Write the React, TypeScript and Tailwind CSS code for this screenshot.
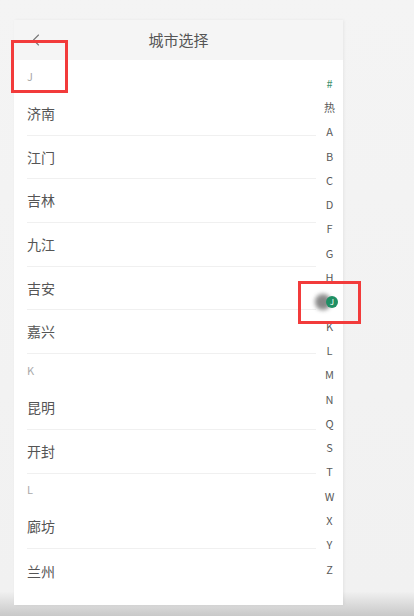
import { ChevronLeft } from 'lucide-react';

const groups = [
  { letter: 'J', cities: ['济南', '江门', '吉林', '九江', '吉安', '嘉兴'] },
  { letter: 'K', cities: ['昆明', '开封'] },
  { letter: 'L', cities: ['廊坊', '兰州'] },
];

const index = ['#', '热', 'A', 'B', 'C', 'D', 'F', 'G', 'H', 'J', 'K', 'L', 'M', 'N', 'Q', 'S', 'T', 'W', 'X', 'Y', 'Z'];

const font = { fontFamily: '"Noto Sans CJK SC", "Noto Sans", sans-serif' };

const IndexBar = () => (
  <div className="w-[27px] flex flex-col items-center pt-[11px]">
    {index.map((ch) => (
      <div key={ch} className="relative h-[24.3px] w-full flex items-center justify-center">
        {ch === 'J' ? (
          <>
            <span className="absolute left-[-1px] top-[4px] w-[16px] h-[16px] rounded-full bg-[#6b6b6b] blur-[2px] opacity-80" />
            <span className="absolute left-[10px] top-[6px] w-[12px] h-[12px] rounded-full bg-[#1f8f64] flex items-center justify-center text-[8px] text-white leading-none">
              J
            </span>
          </>
        ) : (
          <span className={`text-[11px] leading-none ${ch === '#' ? 'text-[#3c8f6c]' : 'text-[#5a5a5a]'}`}>{ch}</span>
        )}
      </div>
    ))}
  </div>
);

const App = () => {
  return (
    <div className="relative h-[616px] w-[414px] overflow-hidden bg-gradient-to-b from-[#f4f4f4] via-[#f1f1f1] via-[96%] to-[#c8c8c8]" style={font}>
      <div className="pt-[20px] pl-[14px]">
        <div className="w-[329px] h-[585px] bg-white shadow-[1px_0_3px_rgba(0,0,0,0.06)] flex flex-col overflow-hidden">
          {/* Header */}
          <header className="h-[40px] bg-[#f5f5f5] flex items-center relative">
            <ChevronLeft size={20} strokeWidth={1.3} className="absolute left-[12px] text-[#777]" />
            <h1 className="flex-1 text-center text-[15px] text-[#555]">城市选择</h1>
          </header>

          <div className="flex flex-1 bg-white">
            <div className="flex-1">
              {groups.map((g) => (
                <div key={g.letter}>
                  <div className="h-[32px] pl-[13px] flex items-center text-[11px] text-[#aaaaaa]">{g.letter}</div>
                  {g.cities.map((c, i) => (
                    <div
                      key={c}
                      className={`h-[43.7px] ml-[13px] flex items-center text-[14px] text-[#555] ${
                        i < g.cities.length - 1 || g.letter !== 'L' ? 'border-b border-[#f0f0f0]' : ''
                      }`}
                    >
                      {c}
                    </div>
                  ))}
                </div>
              ))}
            </div>
            <IndexBar />
          </div>
        </div>
      </div>

      {/* highlight boxes */}
      <div className="absolute left-[11px] top-[40px] w-[57px] h-[53px] border-[3px] border-[#f23b3b]" />
      <div className="absolute left-[298px] top-[281px] w-[63px] h-[43px] border-[3px] border-[#f23b3b]" />
    </div>
  );
};

export default App;
